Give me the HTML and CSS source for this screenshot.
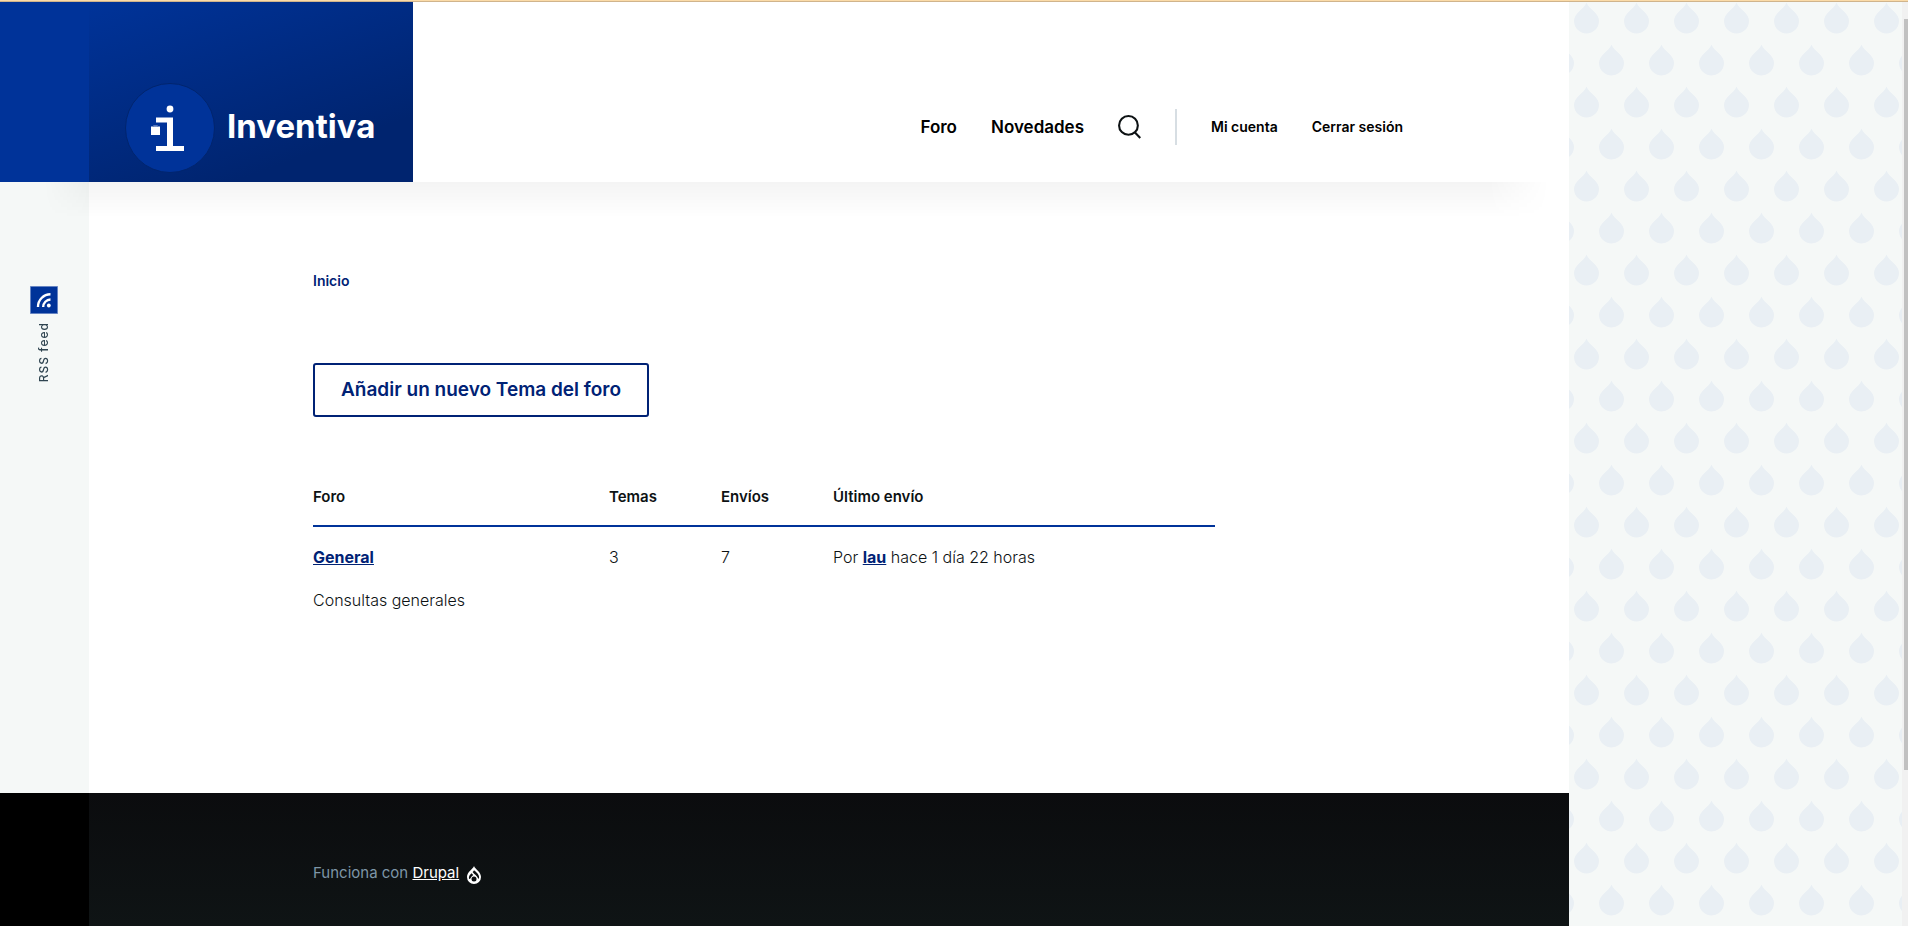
FILE: index.html
```html
<!DOCTYPE html>
<html lang="es">
<head>
<meta charset="utf-8">
<title>Foros | Inventiva</title>
<link rel="stylesheet" href="styles.css">
</head>
<body>
<div class="page">
  <div class="site">
    <header class="header">
      <div class="header-rail"></div>
      <a class="brand" href="#">
        <svg class="brand-logo" viewBox="0 0 90 90" aria-hidden="true">
          <circle cx="45" cy="45" r="44.5" fill="#003399" stroke="#00256e"/>
          <circle cx="45" cy="26" r="3.4" fill="#fff"/>
          <path d="M31 34.500h17v28.500h11v5H31v-5h11v-23.500H31z" fill="#fff"/>
          <path d="M26 43.500h9v8.500h-9z" fill="#fff"/>
          <path d="M28.500 43.500v-1h4v1" fill="none" stroke="#5577bb"/>
        </svg>
        <span class="brand-name">Inventiva</span>
      </a>
      <nav class="nav">
        <a class="nav-main" href="#">Foro</a>
        <a class="nav-main" href="#">Novedades</a>
        <button class="search" type="button" aria-label="Buscar">
          <svg viewBox="0 0 22 23" aria-hidden="true"><circle cx="10" cy="10" r="9" /><path d="M16 16.500l5.300 5.500"/></svg>
        </button>
        <span class="divider"></span>
        <a class="nav-user" href="#">Mi cuenta</a>
        <a class="nav-user" href="#">Cerrar sesión</a>
      </nav>
    </header>
    <div class="body">
      <aside class="rail">
        <a class="rss" href="#">
          <svg class="rss-icon" viewBox="0 0 28 28" aria-hidden="true">
            <path d="M.5.500h27v27H.5z" fill="#003399" stroke="#6684c2"/>
            <path d="M8 21A12.500 12.500 0 0 1 20.500 8.300M13.200 21a7.500 7.500 0 0 1 7.300-7.500" fill="none" stroke="#fff" stroke-width="2.400"/>
            <circle cx="18.800" cy="19.500" r="1.900" fill="#fff"/>
          </svg>
          <span class="rss-label">RSS feed</span>
        </a>
      </aside>
      <main class="content">
        <nav class="breadcrumb"><a href="#">Inicio</a></nav>
        <a class="add-topic" href="#">Añadir un nuevo Tema del foro</a>
        <table class="forum">
          <thead><tr><th class="c-forum">Foro</th><th class="c-num">Temas</th><th class="c-num">Envíos</th><th>Último envío</th></tr></thead>
          <tbody><tr>
            <td><a href="#">General</a><p class="desc">Consultas generales</p></td>
            <td>3</td><td>7</td>
            <td>Por <a href="#">lau</a> hace 1 día 22 horas</td>
          </tr></tbody>
        </table>
      </main>
    </div>
    <footer class="footer">
      <div class="footer-rail"></div>
      <div class="footer-main">
        <span>Funciona con <a href="#">Drupal</a></span>
        <svg class="drop" viewBox="0 0 14 18" aria-hidden="true">
          <path d="M7 0C8 3 14 6 14 11a7 7 0 0 1-14 0C0 6 6 3 7 0z" fill="#fff"/>
          <g fill="#0d1012">
            <circle cx="7" cy="13" r="2.500"/>
            <path d="M7 4.200C9.500 6.300 12.300 8.300 12.100 11.800c-.2 1-.7 1.200-1.200.3C10 10 7.500 8.500 5.600 6.100 6.200 5.500 6.700 4.900 7 4.200z"/>
            <path d="M4.600 7.200 6.200 9C4.800 10.100 3.900 11.300 3.300 12.500 2.700 13.500 2 13 1.900 12 1.700 10 3.200 8.400 4.600 7.200z"/>
          </g>
        </svg>
      </div>
    </footer>
  </div>
  <svg class="pattern" aria-hidden="true">
    <defs>
      <pattern id="drops" width="50" height="84" patternUnits="userSpaceOnUse">
        <g fill="#e9eff4">
          <path id="d" d="M17.500.500C18.500 4 22 6.500 25 9.500 28 12.500 30 15.500 30 19a12.500 12.500 0 0 1-25 0C5 15.500 7 12.500 10 9.500 13 6.500 16.500 4 17.500.500z"/>
          <use href="#d" x="25" y="42"/>
          <use href="#d" x="-25" y="42"/>
        </g>
      </pattern>
    </defs>
    <rect width="100%" height="100%" fill="url(#drops)"/>
  </svg>
  <div class="scrollbar"><div class="scroll-thumb"></div></div>
</div>
</body>
</html>
```
FILE: styles.css
```css
* { box-sizing: border-box; }
body {
  margin: 0;
  font: 16px/24px Inter, sans-serif;
  color: #0d1214;
  background: #f5f8f7;
  border-top: 1px solid #fbdba8;
}
a { color: #002275; }
.page {
  display: grid;
  grid-template-columns: minmax(0, 1569px) 1fr 6px;
  min-height: calc(100vh - 1px);
  border-top: 1px solid #d0b48c;
}
.site { display: flex; flex-direction: column; }
.header {
  display: flex;
  height: 180px;
  background: #fff;
  position: relative;
}
.header::after {
  content: "";
  position: absolute;
  z-index: 1;
  top: 100%;
  left: 44px;
  right: 20px;
  height: 36px;
  background: linear-gradient(rgba(0, 0, 0, .045), transparent);
  -webkit-mask-image: linear-gradient(90deg, transparent, #000 45px, #000 calc(100% - 60px), transparent);
}
.header-rail { width: 89px; background: #003399; }
.brand {
  display: flex;
  align-items: flex-end;
  gap: 12px;
  width: 324px;
  padding: 0 36px 9px;
  color: #fff;
  text-decoration: none;
  background: linear-gradient(160deg, #003399 0%, #00246f 78%);
}
.brand-logo { width: 90px; height: 90px; flex: none; }
.brand-name { font-size: 33px; line-height: 94px; font-weight: 700; }
.nav {
  display: flex;
  align-items: center;
  gap: 34px;
  margin-left: auto;
  padding: 70px 166px 0 0;
  height: 180px;
  align-self: flex-start;
}
.nav a { color: #000; text-decoration: none; line-height: 36px; }
.nav-main { font-size: 17px; font-weight: 600; }
.nav-user { font-size: 14px; font-weight: 600; }
.search { border: 0; padding: 0; background: none; }
.search svg { display: block; width: 23px; height: 24px; fill: none; stroke: #0d1214; stroke-width: 2; }
.divider { width: 2px; height: 36px; background: #d7dee3; }
.body { display: flex; flex: 1; }
.rail { width: 89px; padding: 104px 0 0 30px; }
.rss { display: flex; flex-direction: column; align-items: center; width: 28px; gap: 8px; text-decoration: none; }
.rss-icon { width: 28px; height: 28px; }
.rss-label {
  writing-mode: vertical-rl;
  rotate: 180deg;
  font-size: 12px;
  line-height: 18px;
  font-weight: 500;
  letter-spacing: 1px;
  color: #2f4450;
}
.content { flex: 1; background: #fff; padding: 86px 354px 0 224px; }
.breadcrumb a { font-size: 14px; font-weight: 600; text-decoration: none; }
.add-topic {
  display: block;
  width: fit-content;
  margin: 70px 0 62px;
  padding: 13px 26px;
  border: 2px solid #002275;
  border-radius: 3px;
  font-size: 19px;
  line-height: 24px;
  font-weight: 600;
  text-decoration: none;
}
.forum { width: 100%; border-collapse: collapse; table-layout: fixed; }
.forum th { padding: 6px 0 16px; text-align: left; font-size: 15px; font-weight: 600; border-bottom: 2px solid #003399; }
.forum td { padding: 18px 0 0; vertical-align: top; font-weight: 300; }
.forum td a { font-weight: 700; }
.c-forum { width: 296px; }
.c-num { width: 112px; }
.desc { margin: 19px 0 0; }
.footer { display: flex; height: 133px; }
.footer-rail { width: 89px; background: #000; }
.footer-main {
  display: flex;
  gap: 8px;
  flex: 1;
  padding: 68px 0 0 224px;
  font-size: 15px;
  color: #7e96a7;
  background: linear-gradient(#0b0c0e, #0f1415);
}
.footer-main a { color: #fff; }
.drop { width: 14px; height: 18px; margin-top: 5px; }
.pattern { width: 100%; height: 100%; min-height: 0; }
.scrollbar { background: #f1f1f1; padding: 17px 0 0 2px; }
.scroll-thumb { height: 751px; background: #c1c1c1; }
```
